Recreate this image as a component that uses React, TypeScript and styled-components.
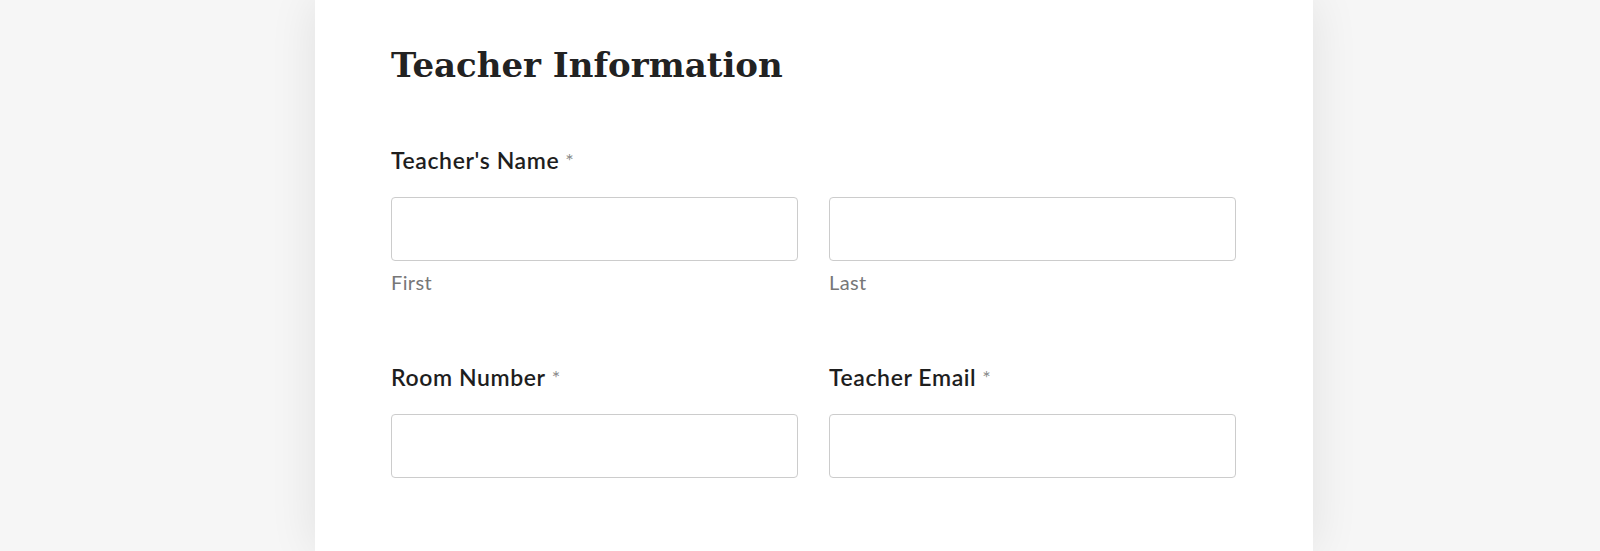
import React from "react";
import styled, { createGlobalStyle } from "styled-components";

const GlobalStyle = createGlobalStyle`
  html, body {
    margin: 0;
    padding: 0;
    background: #f6f6f6;
  }
  body {
    height: 551px;
    overflow: hidden;
  }
`;

const Page = styled.div`
  display: flex;
  height: 551px;
  background: #f6f6f6;
`;

const Card = styled.section`
  margin-left: 315px;
  width: 998px;
  box-sizing: border-box;
  padding: 45px 77px 0 76px;
  background: #ffffff;
  box-shadow: 0 0 45px rgba(0, 0, 0, 0.09);
`;

const Title = styled.h1`
  margin: 0;
  font-family: "DejaVu Serif", "Liberation Serif", serif;
  font-weight: 700;
  font-size: 34px;
  line-height: 40px;
  color: #222222;
`;

const Row = styled.div<{ $top: number }>`
  display: grid;
  grid-template-columns: 1fr 1fr;
  column-gap: 31px;
  margin-top: ${p => p.$top}px;
`;

const FullRow = styled.div<{ $top: number }>`
  margin-top: ${p => p.$top}px;
`;

const Field = styled.div`
  display: flex;
  flex-direction: column;
`;

const Label = styled.label`
  display: block;
  margin-bottom: 25px;
  font-family: Lato, "Liberation Sans", sans-serif;
  font-weight: 600;
  font-size: 23px;
  letter-spacing: 0.6px;
  line-height: 24px;
  color: #1e1e1e;
`;

const Required = styled.span`
  margin-left: 6px;
  font-weight: 400;
  color: #8a8a8a;
  font-size: 20px;
  vertical-align: top;
`;

const Input = styled.input`
  display: block;
  width: 100%;
  height: 64px;
  box-sizing: border-box;
  margin: 0;
  border: 1px solid #cccccc;
  border-radius: 4px;
  background: #ffffff;
  font-family: Lato, "Liberation Sans", sans-serif;
  font-size: 18px;
  padding: 0 14px;
  outline: none;
`;

const SubLabel = styled.span`
  display: block;
  margin-top: 10px;
  font-family: Lato, "Liberation Sans", sans-serif;
  font-size: 20px;
  letter-spacing: 0.4px;
  line-height: 22px;
  color: #777777;
`;

interface IFieldProps {
  label?: string;
  sub?: string;
}

const FormField = ({ label, sub }: IFieldProps) => (
  <Field>
    {label ? (
      <Label>
        {label}
        <Required>*</Required>
      </Label>
    ) : null}
    <Input type="text" />
    {sub ? <SubLabel>{sub}</SubLabel> : null}
  </Field>
);

const App = () => {
  return (
    <>
      <GlobalStyle />
      <Page>
        <Card>
          <Title>Teacher Information</Title>

          <FullRow $top={63}>
            <Label>
              {"Teacher's Name"}
              <Required>*</Required>
            </Label>
            <Row $top={0}>
              <FormField sub="First" />
              <FormField sub="Last" />
            </Row>
          </FullRow>

          <Row $top={72}>
            <FormField label="Room Number" />
            <FormField label="Teacher Email" />
          </Row>
        </Card>
      </Page>
    </>
  );
};

export default App;
